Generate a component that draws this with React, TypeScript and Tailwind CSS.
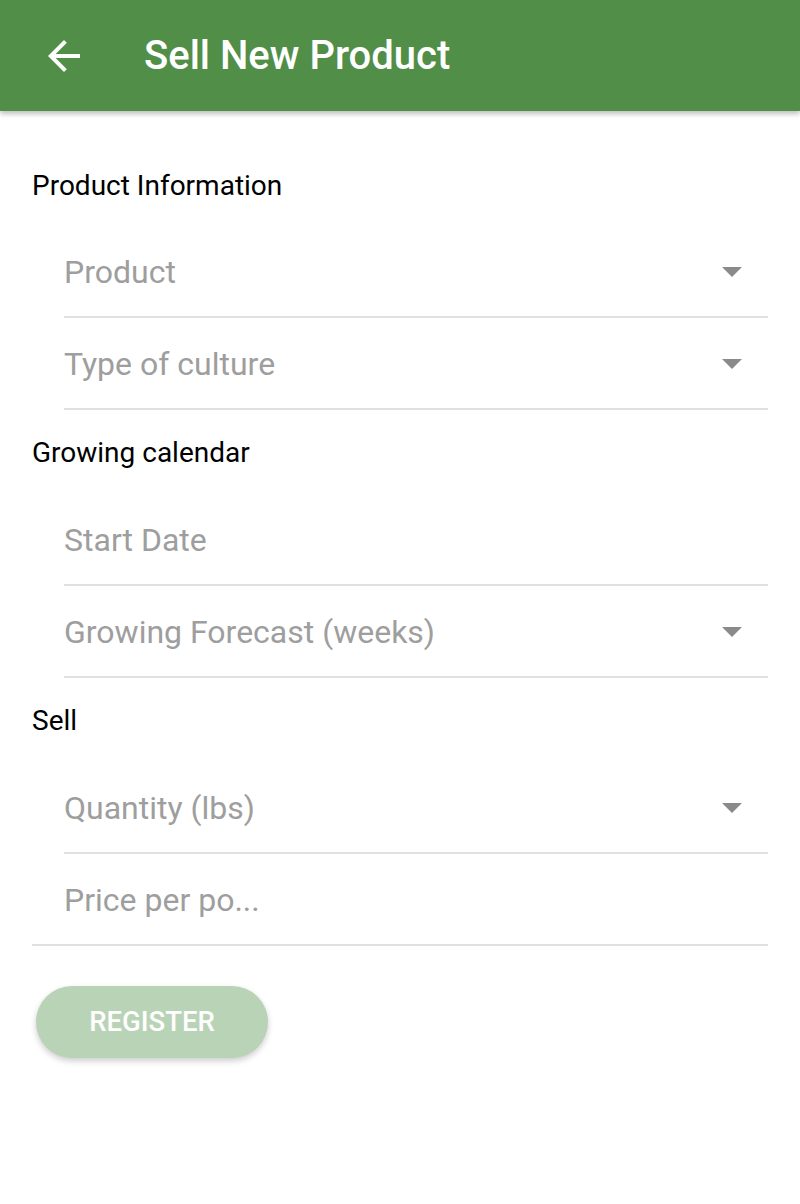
import React from "react";

function Arrow() {
  return (
    <svg width="48" height="48" viewBox="0 0 24 24" className="shrink-0">
      <path fill="#ffffff" d="M20 11H7.83l5.59-5.59L12 4l-8 8 8 8 1.41-1.41L7.83 13H20v-2z" />
    </svg>
  );
}

function Caret() {
  return (
    <svg width="20" height="10" viewBox="0 0 20 10" className="shrink-0">
      <path d="M0 0 L20 0 L10 10 Z" fill="#8a8a8a" />
    </svg>
  );
}

function Field({ label, caret, full }: { label: string; caret?: boolean; full?: boolean }) {
  return (
    <div className={`${full ? "ml-[32px] pl-[32px]" : "ml-[64px]"} mr-[32px] h-[92px] flex items-center justify-between border-b-2 border-[#e0e0e0]`}>
      <span className="text-[32px] text-[#9e9e9e] leading-none mt-[1px]">{label}</span>
      {caret && <div className="mr-[26px] mt-[2px]"><Caret /></div>}
    </div>
  );
}

function Section({ title, first }: { title: string; first?: boolean }) {
  return (
    <div className={`${first ? "pt-[32px] h-[115px]" : "h-[84px]"} pl-[32px] flex items-center`}>
      <span className="text-[28px] text-black leading-none mt-[2px]">{title}</span>
    </div>
  );
}

export default function App() {
  return (
    <div className="w-[800px] h-[1204px] bg-white" style={{ fontFamily: "Roboto, 'Noto Sans', sans-serif" }}>
      <header className="h-[111px] bg-[#518e47] flex items-center shadow-[0_3px_5px_rgba(0,0,0,0.25)] relative">
        <div className="ml-[40px]"><Arrow /></div>
        <h1 className="ml-[56px] text-white text-[40px] font-medium leading-none">Sell New Product</h1>
      </header>
      <Section title="Product Information" first />
      <Field label="Product" caret />
      <Field label="Type of culture" caret />
      <Section title="Growing calendar" />
      <Field label="Start Date" />
      <Field label="Growing Forecast (weeks)" caret />
      <Section title="Sell" />
      <Field label="Quantity (lbs)" caret />
      <Field label="Price per po..." full />
      <div className="pl-[36px] pt-[40px]">
        <button className="w-[232px] h-[72px] rounded-full bg-[#b9d3b6] text-white text-[27.5px] font-medium shadow-[0_3px_6px_rgba(0,0,0,0.2)] leading-none">
          REGISTER
        </button>
      </div>
    </div>
  );
}
